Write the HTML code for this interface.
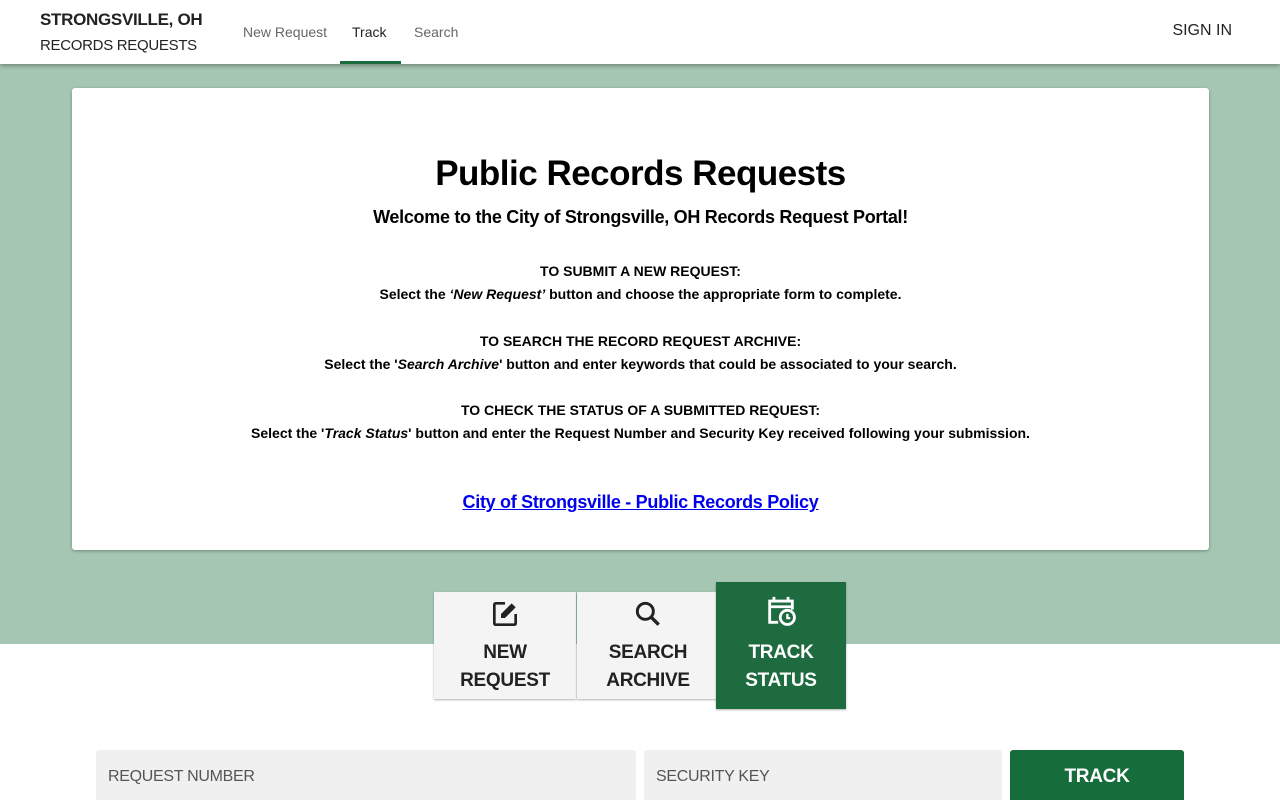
<!DOCTYPE html>
<html><head><style>
*{box-sizing:border-box;margin:0;padding:0}
body{width:1280px;height:800px;overflow:hidden;font-family:"Liberation Sans",sans-serif;background:#fff;position:relative}
.hdr{position:absolute;top:0;left:0;width:1280px;height:64px;background:#fff;box-shadow:0 2px 4px rgba(0,0,0,.3);z-index:3}
.t1{position:absolute;left:40px;top:10px;font-size:17px;font-weight:bold;color:#222;letter-spacing:-0.3px}
.t2{position:absolute;left:40px;top:37px;font-size:15px;color:#222;letter-spacing:-0.3px}
.nav{position:absolute;top:24px;font-size:14px;color:#666}
.green{position:absolute;top:64px;left:0;width:1280px;height:580px;background:#a4c6b2}
.card{position:absolute;left:72px;top:88px;width:1137px;height:462px;background:#fff;border-radius:3px;box-shadow:0 1px 3px rgba(0,0,0,.3);text-align:center;color:#000}
h1{position:absolute;left:0;top:66px;width:100%;font-size:35px;font-weight:bold;letter-spacing:-0.5px}
.w{position:absolute;left:0;top:119px;width:100%;font-size:18px;font-weight:bold;letter-spacing:-0.3px}
.p{position:absolute;left:0;width:100%;font-size:14px;font-weight:bold;line-height:23px}
a{position:absolute;left:0;top:404px;width:100%;font-size:18px;font-weight:bold;color:#0000ee;text-decoration:underline;letter-spacing:-0.3px}
.btn{position:absolute;top:592px;width:142px;height:107px;background:#f4f4f4;box-shadow:0 1px 2px rgba(0,0,0,.3);text-align:center;font-size:19px;font-weight:bold;color:#222;line-height:28px;letter-spacing:-0.3px}
.btn svg{display:block;margin:6px auto 9px}
.in{position:absolute;top:750px;height:50px;background:#f0f0f0;border-radius:3px 3px 0 0;font-size:16px;color:#555;padding:18px 12px;letter-spacing:-0.3px}
</style></head><body>
<div class="hdr">
<div class="t1">STRONGSVILLE, OH</div><div class="t2">RECORDS REQUESTS</div>
<div class="nav" style="left:243px">New Request</div>
<div class="nav" style="left:352px;color:#222">Track</div>
<div style="position:absolute;left:340px;top:61px;width:61px;height:3px;background:#1e6b40"></div>
<div class="nav" style="left:414px">Search</div>
<div style="position:absolute;right:48px;top:22px;font-size:16px;color:#222">SIGN IN</div>
</div>
<div class="green"></div>
<div class="card">
<h1>Public Records Requests</h1>
<div class="w">Welcome to the City of Strongsville, OH Records Request Portal!</div>
<div class="p" style="top:172px">TO SUBMIT A NEW REQUEST:<br>Select the <i>‘New Request’</i> button and choose the appropriate form to complete.</div>
<div class="p" style="top:242px">TO SEARCH THE RECORD REQUEST ARCHIVE:<br>Select the '<i>Search Archive</i>' button and enter keywords that could be associated to your search.</div>
<div class="p" style="top:311px">TO CHECK THE STATUS OF A SUBMITTED REQUEST:<br>Select the '<i>Track Status</i>' button and enter the Request Number and Security Key received following your submission.</div>
<a>City of Strongsville - Public Records Policy</a>
</div>
<div class="btn" style="left:434px"><svg width="32" height="32" viewBox="0 0 24 24" style="margin-top:6px"><path d="M12 4H5a1 1 0 0 0-1 1v14a1 1 0 0 0 1 1h14a1 1 0 0 0 1-1v-7" fill="none" stroke="#222" stroke-width="2"/><path d="M9 15v-3l8-8 3 3-8 8z" fill="#222"/></svg>NEW<br>REQUEST</div>
<div class="btn" style="left:577px"><svg width="32" height="32" viewBox="0 0 24 24" style="margin-top:6px"><circle cx="10" cy="10" r="6" fill="none" stroke="#222" stroke-width="2.2"/><path d="M14.5 14.5 20 20" stroke="#222" stroke-width="2.6"/></svg>SEARCH<br>ARCHIVE</div>
<div class="btn" style="left:716px;top:582px;width:130px;height:127px;background:#1e6b40;color:#fff"><svg width="34" height="34" viewBox="0 0 24 24" style="margin-top:12px;margin-bottom:11px"><path d="M7 2v3M17 2v3" stroke="#fff" stroke-width="2"/><path d="M10 20H4V5h16v6M4 9h16" fill="none" stroke="#fff" stroke-width="2"/><circle cx="16.5" cy="16.5" r="5" fill="none" stroke="#fff" stroke-width="2"/><path d="M16.5 14v3h2" fill="none" stroke="#fff" stroke-width="1.6"/></svg>TRACK<br>STATUS</div>
<div class="in" style="left:96px;width:540px">REQUEST NUMBER</div>
<div class="in" style="left:644px;width:358px">SECURITY KEY</div>
<div style="position:absolute;left:1010px;top:750px;width:174px;height:50px;background:#166c3b;border-radius:3px 3px 0 0;color:#fff;font-weight:bold;font-size:19px;text-align:center;padding-top:16px;letter-spacing:-0.3px">TRACK</div>
</body></html>
